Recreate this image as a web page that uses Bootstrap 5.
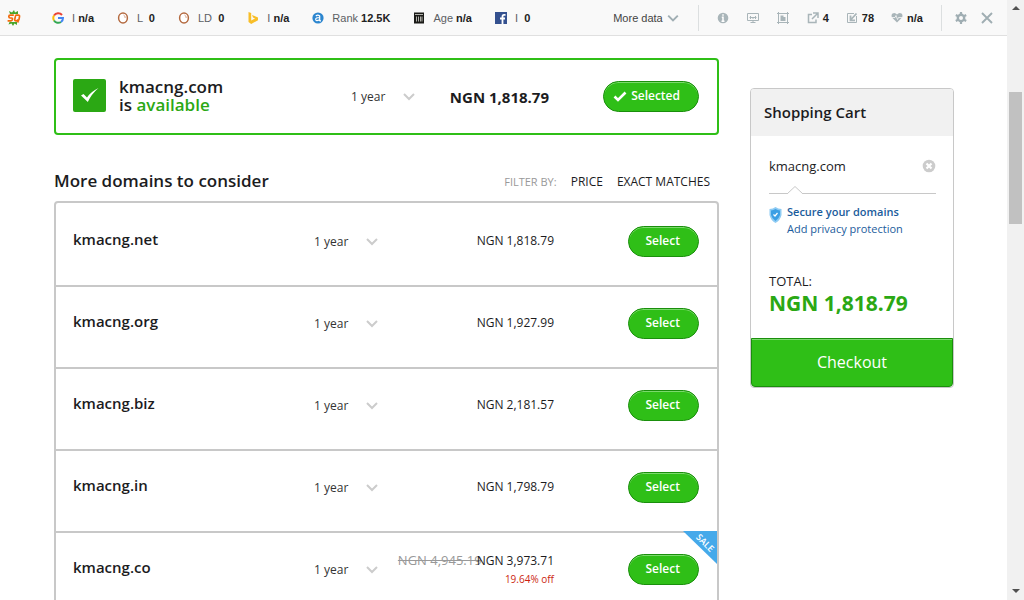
<!DOCTYPE html>
<html lang="en">
<head>
<meta charset="utf-8">
<meta name="viewport" content="width=device-width, initial-scale=1">
<title>kmacng.com is available</title>
<link rel="stylesheet" href="https://cdn.jsdelivr.net/npm/bootstrap@5.3.0/dist/css/bootstrap.min.css">
<style>
  :root { --green: #2fbf17; --green-dark: #1a8f0c; --line: #c8c8c8; --ink: #1c1c1e; }
  body { font-family: "Open Sans", sans-serif; font-size: 12px; line-height: 18px; color: var(--ink); background: #fff; }
  a { text-decoration: none; color: inherit; }
  h1, h2, h3, p { margin: 0; }

  /* SEO toolbar */
  .seobar { height: 36px; background: #f9f9f9; border-bottom: 1px solid #e0e0e0; font: 11px/16px "Liberation Sans", Arial, sans-serif; color: #5c6064; white-space: nowrap; }
  .seobar strong { color: #222; }
  .seobar svg { flex: none; }
  .stat { gap: 8px; }
  .metrics { gap: 23px; padding-left: 7px; }
  .tools { color: #a9b5b9; padding-left: 18px; gap: 18px; border-left: 1px solid #dcdfe0; height: 26px; }
  .tools .stat { gap: 4px; }
  .tools .links { gap: 17px; }
  .closers { color: #a0aeb3; border-left: 1px solid #dcdfe0; height: 26px; padding: 0 14px 0 13px; gap: 14px; margin-left: 18px; }
  .plain { background: none; border: 0; padding: 0; color: inherit; display: flex; align-items: center; }
  .more { color: #444; gap: 4px; margin-right: 19px; }

  /* Results */
  .page { padding: 22px 53px 0 54px; gap: 31px; }
  .picked { height: 77px; border: 2px solid var(--green); border-radius: 4px; padding: 0 18px 2px 17px; }
  .tick { width: 33px; height: 33px; background: #2ba814; border-radius: 2px; margin-right: 13px; }
  .picked h1 { font-size: 17px; line-height: 18px; font-weight: 600; }
  .avail { color: #2ba814; }
  .term { appearance: none; border: 0; width: 64px; padding: 0; font-size: 12px; line-height: 18px; color: #333;
    background: url("data:image/svg+xml,%3Csvg xmlns='http://www.w3.org/2000/svg' width='12' height='8'%3E%3Cpath d='M1 1l5 5 5-5' fill='none' stroke='%23ccc' stroke-width='2'/%3E%3C/svg%3E") no-repeat right center; }
  .picked .term, .price-picked { margin-top: 2px; }
  .price { width: 176px; text-align: right; font-size: 12px; }
  .price-picked { width: 134px; font-size: 15px; font-weight: 700; text-align: right; }
  .act { width: 145px; text-align: right; }
  .act-picked { width: 150px; padding-top: 2px; }
  .pill { height: 31px; border: 1px solid var(--green-dark); border-radius: 16px; background: var(--green); color: #fff; font-size: 12px; line-height: 18px; font-weight: 600; padding: 0 18px 2px 17px; box-shadow: inset 0 1px 0 #7bd96c; }
  .pill-picked { padding: 0 18px 2px 9px; }
  .pill:hover { background: #2ba814; color: #fff; }

  .listhead { margin-top: 36px; height: 20px; padding-right: 9px; }
  .listhead h2 { font-size: 17px; line-height: 20px; font-weight: 600; }
  .filters { font-size: 12px; gap: 14px; padding-top: 2px; }
  .filters .by { color: #999; font-size: 11px; }
  .offers { margin-top: 10px; border: 2px solid var(--line); border-radius: 4px 4px 0 0; padding-top: 2px; }
  .offer { height: 82px; border-bottom: 2px solid var(--line); padding: 21px 18px 0 17px; }
  .offer h3 { font-size: 15px; line-height: 27px; font-weight: 600; }
  .offer .term { margin-top: 7px; }
  .offer .price { padding-top: 6px; }
  .offer .price-sale { padding-top: 0; margin-top: -3px; }
  .was { color: #999; font-size: 13px; margin-right: -5px; }
  .off { color: #cc1f10; font-size: 10px; }
  .ribbon { top: -2px; right: 0; }

  /* Cart */
  .cart { width: 204px; margin-top: 30px; flex: none; }
  .cartbox { border: 1px solid var(--line); border-radius: 4px; }
  .carthead { background: #f1f1f1; padding: 13px 13px 14px; border-radius: 3px 3px 0 0; font-size: 15px; line-height: 20px; font-weight: 600; }
  .cartbody { padding: 21px 17px 21px 18px; }
  .item { font-size: 13px; }
  .rule { margin-top: 10px; height: 9px; border-bottom: 1px solid var(--line); }
  .secure { margin-top: 9px; gap: 5px; font-size: 11px; line-height: 17px; color: #1b5c9c; }
  .secure strong { font-weight: 600; }
  .total { margin-top: 35px; font-size: 13px; }
  .sum { font-size: 21px; line-height: 27px; font-weight: 700; color: #2ba814; }
  .checkout { height: 49px; width: 100%; border: 1px solid var(--green-dark); border-radius: 0 0 4px 4px; background: var(--green); color: #fff; font-size: 16px; line-height: 20px; padding: 0 0 2px; box-shadow: inset 0 1px 0 #7bd96c; }

  /* Scroll track */
  .track { width: 17px; flex: none; background: #f1f1f1; }
  .thumb { width: 13px; height: 22vh; background: #c1c1c1; margin-top: 81px; }
</style>
</head>
<body>
<svg class="d-none">
  <symbol id="chev" viewBox="0 0 10 8"><path d="M1 2l4 4 4-4" fill="none" stroke="#a0aeb3" stroke-width="1.6"/></symbol>
  <symbol id="ring" viewBox="0 0 12 12"><ellipse cx="6" cy="6" rx="4.4" ry="4.9" fill="#fff" stroke="#b46a40" stroke-width="1.5"/><path d="M6.5 3q1.800 .6 1.700 3" fill="none" stroke="#d9a58a"/></symbol>
</svg>
<div class="d-flex vh-100 overflow-hidden">
  <div class="flex-grow-1 overflow-hidden">
    <header class="seobar d-flex align-items-center">
      <div class="metrics d-flex align-items-center">
        <svg width="14" height="16" viewBox="0 0 14 16" role="img" aria-label="SEOquake"><path d="M3 4L2 1l3 1.500L7 0l1 2.500L11 1v3zM2.500 12L1.500 14.500l3-1L6 16l1.500-2.500L10 15v-3z" fill="#4aa52a"/><path d="M6.800 5.200H3.200Q1.800 5.200 1.800 6.600T3.200 8H4.500Q5.600 8 5.500 9.300T4 10.800H.6" fill="none" stroke="#f26a0b" stroke-width="1.700"/><path d="M9.300 5.200h2q1.500 0 1.200 1.500l-.5 2.600q-.3 1.500-1.800 1.500H9q-1.500 0-1.200-1.500l.5-2.600Q8.500 5.200 9.300 5.200zM10 9.500l1.500 3" fill="none" stroke="#f26a0b" stroke-width="1.700"/></svg>
        <div class="d-flex align-items-center stat ms-2"><svg width="12" height="12" viewBox="0 0 12 12"><g fill="none" stroke-width="2"><path d="M10 3A5 5 0 0 0 2 3.500" stroke="#e94335"/><path d="M2 3.500A5 5 0 0 0 2 8.500" stroke="#fbbc05"/><path d="M2 8.500A5 5 0 0 0 9 10" stroke="#34a853"/><path d="M9 10A5 5 0 0 0 11 6H6" stroke="#4285f4"/></g></svg><span>I <strong>n/a</strong></span></div>
        <div class="d-flex align-items-center stat"><svg width="12" height="12"><use href="#ring"/></svg><span>L &nbsp;<strong>0</strong></span></div>
        <div class="d-flex align-items-center stat"><svg width="12" height="12"><use href="#ring"/></svg><span>LD &nbsp;<strong>0</strong></span></div>
        <div class="d-flex align-items-center stat"><svg width="12" height="12" viewBox="0 0 12 12"><path d="M1.500 0l2.700 1v7.600L8 6.500 6 5.500 5 3l6 2.400v2.800L4.200 12 1.500 10z" fill="#f8be28"/></svg><span>I <strong>n/a</strong></span></div>
        <div class="d-flex align-items-center stat"><svg width="12" height="12" viewBox="0 0 12 12"><circle cx="6" cy="6" r="5.600" fill="#2c86cf"/><path d="M3.800 4q2-1.600 3.900 0v5M7.500 5.500q-4 0-3.800 2t3.800 .3M7.500 8.800h1.500" fill="none" stroke="#fff" stroke-width="1.200"/></svg><span>Rank <strong>12.5K</strong></span></div>
        <div class="d-flex align-items-center stat"><svg width="12" height="12" viewBox="0 0 12 12"><path d="M1 .5h10v2.500H1zM1 3h10v8.500H1z" fill="#1b1b18"/><path d="M2 2.500h8M3.500 4.500v5M5.500 4.500v5M7.500 4.500v5M9 4.500v5" stroke="#d8d8d2" stroke-width=".8"/></svg><span>Age <strong>n/a</strong></span></div>
        <div class="d-flex align-items-center stat"><svg width="12" height="12" viewBox="0 0 12 12"><rect width="12" height="12" fill="#34518f"/><path d="M7.500 12V4.500q0-1.700 1.500-1.700h1.500M5 6.500h5" fill="none" stroke="#fff" stroke-width="1.800"/></svg><span>I &nbsp;<strong>0</strong></span></div>
      </div>
      <button class="plain more ms-auto" type="button">More data <svg width="12" height="10"><use href="#chev"/></svg></button>
      <div class="tools d-flex align-items-center">
        <svg width="12" height="12" viewBox="0 0 12 12"><circle cx="6" cy="6" r="5.300" fill="currentColor"/><path d="M6 2.200v1.600M4.800 5.200H6v4M4.500 9.200h3" stroke="#fff" stroke-width="1.500" fill="none"/></svg>
        <svg width="12" height="12" viewBox="0 0 12 12" fill="none" stroke="currentColor"><path d="M.5 1.500h11v7H.5zM3.500 10.500h5M6 8.500v2M3.500 4v3M6 5v2M8.500 4v3M2.500 5.500h7"/></svg>
        <svg width="12" height="12" viewBox="0 0 12 12" fill="none" stroke="currentColor"><path d="M1.500 0v12M0 10.500h12M10.500 0v12M0 1.500h12"/><path d="M3.500 3.500h3V5h2v4h-5z" fill="currentColor" stroke="none"/></svg>
        <div class="links d-flex">
          <div class="d-flex align-items-center stat"><svg width="12" height="12" viewBox="0 0 12 12" fill="none" stroke="currentColor" stroke-width="1.500"><path d="M5 2.500H1.500v8H9V7.500M6 1h5v5M11 1L5 7"/></svg><strong>4</strong></div>
          <div class="d-flex align-items-center stat"><svg width="12" height="12" viewBox="0 0 12 12" fill="none" stroke="currentColor"><path d="M8 1.500H1.500v9h9V4"/><path d="M10.500 1.500L5 7.500M4.500 3.500v4.800H9" stroke-width="1.800"/></svg><strong>78</strong></div>
          <div class="d-flex align-items-center stat"><svg width="12" height="12" viewBox="0 0 12 12"><path d="M6 2.500Q4 0 1.500 1.500-.5 3.500 1.500 6L6 10.500 10.500 6q2-2.500 0-4.500Q8 0 6 2.500z" fill="currentColor"/><path d="M1 5.500h3l1-2 1.500 4 1-2H11" fill="none" stroke="#f9f9f9" stroke-width=".8"/></svg><strong>n/a</strong></div>
        </div>
      </div>
      <div class="closers d-flex align-items-center">
        <button class="plain" type="button" aria-label="Settings"><svg width="12" height="12" viewBox="0 0 12 12"><circle cx="6" cy="6" r="3.200" fill="none" stroke="currentColor" stroke-width="2.400"/><path d="M6 0v2.500M6 9.500V12M.8 3L3 4.200M9 7.800L11.200 9M.8 9L3 7.800M9 4.200L11.200 3" stroke="currentColor" stroke-width="2.200"/></svg></button>
        <button class="plain" type="button" aria-label="Close"><svg width="12" height="12" viewBox="0 0 12 12"><path d="M1 1l10 10M11 1L1 11" stroke="currentColor" stroke-width="1.900"/></svg></button>
      </div>
    </header>

    <div class="page d-flex align-items-start">
      <main class="flex-grow-1">
        <section class="picked d-flex align-items-center">
          <div class="tick d-flex align-items-center justify-content-center"><svg width="18" height="15" viewBox="0 0 18 15"><path d="M0 7.500L2.500 6 6 9.500Q10 3.500 17.500 0 10.500 6 6.800 14z" fill="#fff"/></svg></div>
          <h1 class="flex-grow-1">kmacng.com<br>is <span class="avail">available</span></h1>
          <select class="term" aria-label="Registration term for kmacng.com"><option>1 year</option><option>2 years</option></select>
          <div class="price-picked">NGN 1,818.79</div>
          <div class="act act-picked"><button class="pill pill-picked" type="button"><svg class="me-1" width="14" height="11" viewBox="0 0 14 11"><path d="M1.500 5.500L5 9l7.500-7.500" fill="none" stroke="#fff" stroke-width="2.600"/></svg>Selected</button></div>
        </section>

        <div class="listhead d-flex align-items-center justify-content-between">
          <h2>More domains to consider</h2>
          <nav class="filters d-flex align-items-center" aria-label="Filter"><span class="by">FILTER BY:</span><a href="#">PRICE</a><a href="#">EXACT MATCHES</a></nav>
        </div>

        <section class="offers">
          <article class="offer d-flex"><h3 class="flex-grow-1">kmacng.net</h3><div><select class="term" aria-label="Registration term for kmacng.net"><option>1 year</option></select></div><div class="price">NGN 1,818.79</div><div class="act"><button class="pill" type="button">Select</button></div></article>
          <article class="offer d-flex"><h3 class="flex-grow-1">kmacng.org</h3><div><select class="term" aria-label="Registration term for kmacng.org"><option>1 year</option></select></div><div class="price">NGN 1,927.99</div><div class="act"><button class="pill" type="button">Select</button></div></article>
          <article class="offer d-flex"><h3 class="flex-grow-1">kmacng.biz</h3><div><select class="term" aria-label="Registration term for kmacng.biz"><option>1 year</option></select></div><div class="price">NGN 2,181.57</div><div class="act"><button class="pill" type="button">Select</button></div></article>
          <article class="offer d-flex"><h3 class="flex-grow-1">kmacng.in</h3><div><select class="term" aria-label="Registration term for kmacng.in"><option>1 year</option></select></div><div class="price">NGN 1,798.79</div><div class="act"><button class="pill" type="button">Select</button></div></article>
          <article class="offer d-flex position-relative"><h3 class="flex-grow-1">kmacng.co</h3><div><select class="term" aria-label="Registration term for kmacng.co"><option>1 year</option></select></div><div class="price price-sale"><s class="was">NGN 4,945.19</s>NGN 3,973.71<div class="off">19.64% off</div></div><div class="act"><button class="pill" type="button">Select</button></div>
            <svg class="ribbon position-absolute" width="34" height="34" viewBox="0 0 34 34"><path d="M0 0h34v33z" fill="#45a9ea"/><text x="22" y="15" transform="rotate(45 22 12)" text-anchor="middle" font-size="9" font-weight="600" fill="#fff">SALE</text></svg>
          </article>
        </section>
      </main>

      <aside class="cart">
        <div class="cartbox">
          <h2 class="carthead">Shopping Cart</h2>
          <div class="cartbody">
            <div class="item d-flex justify-content-between align-items-center"><span>kmacng.com</span><button class="plain" type="button" aria-label="Remove kmacng.com"><svg width="14" height="14" viewBox="0 0 14 14"><circle cx="7" cy="7" r="6.300" fill="#ccc"/><path d="M4.500 4.500l5 5M9.500 4.500l-5 5" stroke="#fff" stroke-width="2.200"/></svg></button></div>
            <div class="rule"><svg class="d-block ms-3" width="20" height="9" viewBox="0 0 20 9"><path d="M2 9h16" stroke="#fff" stroke-width="2"/><path d="M2 9l8-7.500L18 9" fill="#fff" stroke="#c8c8c8"/></svg></div>
            <div class="secure d-flex"><svg class="mt-1" width="13" height="16" viewBox="0 0 13 16"><path d="M6.500 0Q9 2 12.500 2v6q-1 5-6 8-5-3-6-8V2Q4 2 6.500 0z" fill="#8ecbf3"/><path d="M6.500 2Q8.500 3.300 11 3.500V8q-1 3.500-4.500 6Q3 11.500 2 8V3.500Q4.500 3.300 6.500 2z" fill="#3c9fe4"/><path d="M4.500 7.500L6 9l2.500-3" fill="none" stroke="#fff" stroke-width="1.200"/></svg><a href="#"><strong>Secure your domains</strong><br>Add privacy protection</a></div>
            <p class="total">TOTAL:</p>
            <p class="sum">NGN 1,818.79</p>
          </div>
          <button class="checkout d-block" type="button">Checkout</button>
        </div>
      </aside>
    </div>
  </div>
  <div class="track d-flex flex-column align-items-center pt-1 pb-1" aria-hidden="true">
    <svg width="8" height="7"><path d="M4 2l4 4H0z" fill="#505050"/></svg>
    <div class="thumb"></div>
    <svg class="mt-auto" width="8" height="8"><path d="M0 1h8L4 5z" fill="#505050"/></svg>
  </div>
</div>
<script src="https://cdn.jsdelivr.net/npm/bootstrap@5.3.0/dist/js/bootstrap.bundle.min.js"></script>
</body>
</html>
